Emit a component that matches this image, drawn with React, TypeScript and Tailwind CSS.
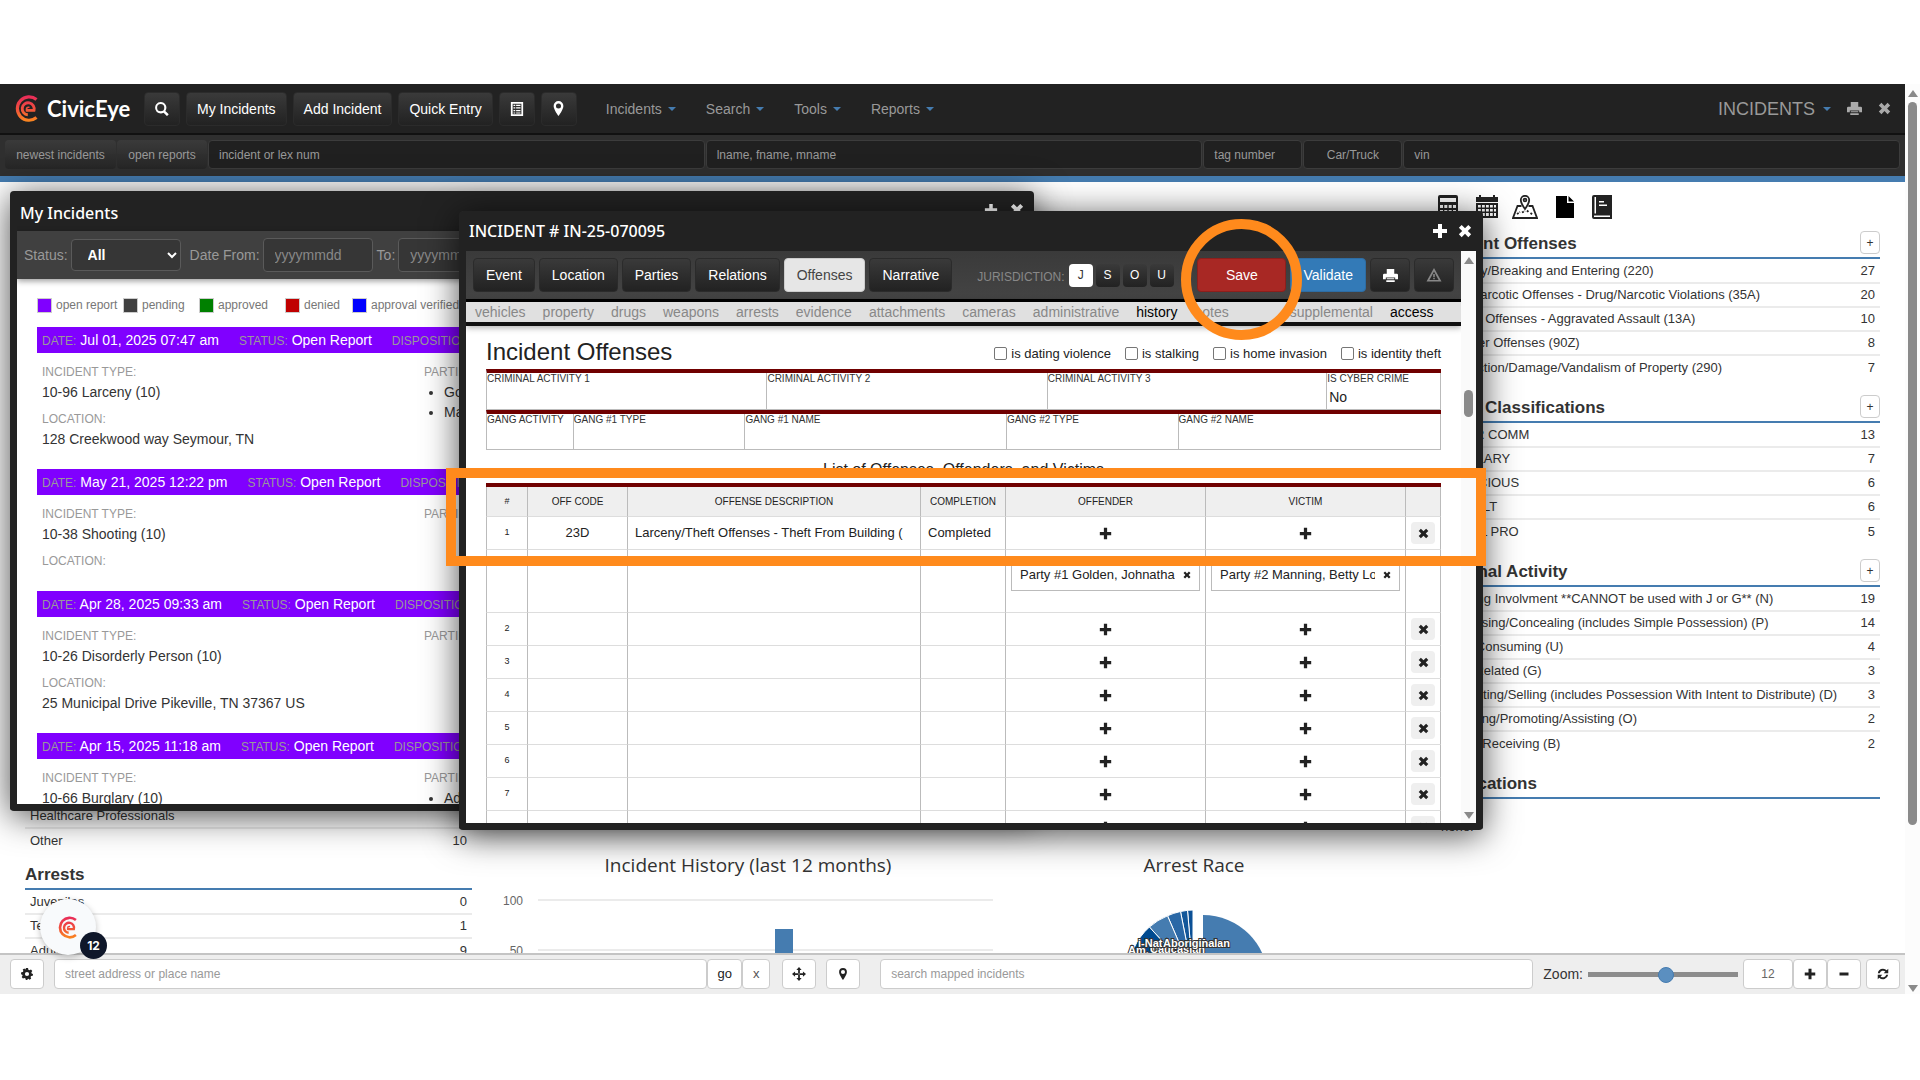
import { useState } from "react";

type IconProps = { name: string; className?: string };

const icons: any = {
  plus: "M6 1h4v5h5v4h-5v5H6v-5H1V6h5z",
  minus: "M2 6h12v4H2z",
  remove: "M4.2 1 8 4.8 11.8 1 15 4.2 11.2 8l3.8 3.8-3.2 3.2L8 11.2 4.2 15 1 11.8 4.8 8 1 4.2z",
  search:
    "M6.5 0a6.5 6.5 0 0 1 5.3 10.2l3.9 3.9-2 2-3.9-3.9A6.5 6.5 0 1 1 6.5 0zm0 2.4a4.1 4.1 0 1 0 0 8.2 4.1 4.1 0 0 0 0-8.2z",
  pin: "M8 0a5.2 5.2 0 0 1 5.2 5.2C13.2 9 8 16 8 16S2.8 9 2.8 5.2A5.2 5.2 0 0 1 8 0zm0 2.6a2.7 2.7 0 1 0 0 5.4 2.7 2.7 0 0 0 0-5.4z",
  print: "M4 1h8v5h3l1 1v5h-3v-2H3v2H0V7l1-1h3zM4 11h8v1H4zM3.500 13h9v2h-9z",
  list: "M1 0h14v16H1zm2 2v12h10V2zm1 1h2v1.500H4zm3 0h5v1.500H7zM4 6h2v1.500H4zm3 0h5v1.500H7zM4 9h2v1.500H4zm3 0h5v1.500H7zM4 12h2v1H4zm3 0h5v1H7z",
  warning: "M8 1l7.500 13.500H.5zm0 3.600L3.400 13h9.200zM7.200 7h1.600v3.200H7.200zm0 4h1.600v1.300H7.200z",
  cog: "M6.600 0h2.800l.4 2.200 1.500.8 2-1 1.800 2.100-1.300 1.700.4 1.500L16 8l-.3 2.400-2.200.4-.8 1.300.9 2-2.100 1.500-1.700-1.300-1 .2L8.600 16H6.400L6 13.900l-1.400-.7-2 .9-1.700-2.200 1.200-1.700-.4-1.200L0 8.200l.3-2.400 2.100-.4.8-1.400-.9-2L4.400.6 6 1.900zM8 5.200a2.800 2.800 0 1 0 0 5.600 2.800 2.800 0 0 0 0-5.600z",
  refresh:
    "M8 1a7 7 0 0 1 5 2.100L15 1v6H9l2.200-2.200A4.500 4.500 0 0 0 3.700 7H1.100A7 7 0 0 1 8 1zM1 9h6l-2.200 2.200A4.500 4.500 0 0 0 12.300 9h2.600A7 7 0 0 1 3 12.900L1 15z",
  locate:
    "M8 0l3 3.500H9V7h3.500V5L16 8l-3.500 3V9H9v3.500h2L8 16l-3-3.500h2V9H3.500v2L0 8l3.500-3v2H7V3.500H5zM8 7.200 7.200 8l.8.8.8-.8z",
};

const Icon = ({ name, className = "size-4" }: IconProps) => (
  <svg viewBox="0 0 16 16" className={className} fill="currentColor" fillRule="evenodd" aria-hidden="true">
    <path d={icons[name]} />
  </svg>
);

const Logo = ({ className, id }: { className: string; id: string }) => (
  <svg viewBox="0 0 24 27" className={className} fill="none" stroke={`url(#${id})`} aria-hidden="true">
    <defs>
      <linearGradient id={id} x1="0" y1="0" x2="0" y2="27" gradientUnits="userSpaceOnUse">
        <stop offset="0" stopColor="#e8295c" />
        <stop offset="0.5" stopColor="#f04e3e" />
        <stop offset="1" stopColor="#fb8a1e" />
      </linearGradient>
    </defs>
    <path d="M21.500 4.500A11.700 11.700 0 1 0 21.500 22.600" strokeWidth="3.200" />
    <path d="M11.500 15.400H19A6 6 0 1 0 12.800 19.800" strokeWidth="2.900" />
    <path d="M11.500 16.500v-2.200a2 2 0 0 1 2-2h1" strokeWidth="1.600" />
  </svg>
);

const Caret = () => (
  <span className="inline-block border-x-4 border-t-4 border-x-transparent border-t-[#457cb0]" />
);

const darkButton =
  "flex items-center justify-center border border-[#2b2b2b] bg-linear-to-b from-[#3a3a3a] to-[#222] text-sm text-white rounded-sm";

const searchField =
  "h-[29px] min-w-0 border border-[#3c3c3c] bg-[#202020] px-2.5 text-xs text-[#999] placeholder-[#999] rounded-sm";

const menus = ["Incidents", "Search", "Tools", "Reports"];

const TopNav = () => (
  <nav className="flex h-[51px] shrink-0 items-center border-b-2 border-[#111] bg-[#222] pr-3.5 pl-[15px]">
    <a href="#" className="flex w-[129px] items-center gap-2 font-['Lato'] text-[22px] font-bold text-white">
      <Logo id="logo-nav" className="h-[27px] w-6" />
      CivicEye
    </a>
    <div className="flex gap-1.5">
      <button aria-label="Search" className={`${darkButton} h-[34px] w-9`}>
        <Icon name="search" className="size-[14px]" />
      </button>
      <button className={`${darkButton} h-[34px] px-2.5`}>My Incidents</button>
      <button className={`${darkButton} h-[34px] px-2.5`}>Add Incident</button>
      <button className={`${darkButton} h-[34px] px-2.5`}>Quick Entry</button>
      <button aria-label="List" className={`${darkButton} h-[34px] w-9`}>
        <Icon name="list" className="size-[14px]" />
      </button>
      <button aria-label="Map" className={`${darkButton} h-[34px] w-9`}>
        <Icon name="pin" className="size-[15px]" />
      </button>
    </div>
    <div className="ml-[29px] flex gap-[30px] text-sm text-[#999]">
      {menus.map((m) => (
        <a href="#" key={m} className="flex items-center gap-1.5">
          {m}
          <Caret />
        </a>
      ))}
    </div>
    <div className="ml-auto flex items-center gap-4 text-[#aaa]">
      <a href="#" className="flex items-center gap-2 text-lg text-[#999]">
        INCIDENTS
        <Caret />
      </a>
      <button aria-label="Print">
        <Icon name="print" className="size-[15px]" />
      </button>
      <button aria-label="Close">
        <Icon name="remove" className="size-[13px]" />
      </button>
    </div>
  </nav>
);

const SearchBar = () => (
  <div className="flex h-[47px] shrink-0 gap-px border-b-6 border-[#457cb0] bg-[#2f2f2f] pt-[5px] pr-[5px] pl-[5px]">
    <button className="h-[29px] w-[111px] rounded-sm bg-linear-to-b from-[#3a3a3a] to-[#262626] text-xs text-[#999]">
      newest incidents
    </button>
    <button className="h-[29px] w-[90px] rounded-sm bg-linear-to-b from-[#3a3a3a] to-[#262626] text-xs text-[#999]">
      open reports
    </button>
    <input aria-label="incident or lex num" placeholder="incident or lex num" className={`${searchField} flex-1`} />
    <input aria-label="name" placeholder="lname, fname, mname" className={`${searchField} flex-1`} />
    <input aria-label="tag number" placeholder="tag number" className={`${searchField} w-[99px]`} />
    <button className={`${searchField} w-[99px] text-[#777]`}>Car/Truck</button>
    <input aria-label="vin" placeholder="vin" className={`${searchField} flex-1`} />
  </div>
);

type Row = [string, string];

const Rows = ({ rows }: { rows: Row[] }) => (
  <table className="w-full text-[13px] leading-5 text-[#333]">
    <tbody>
      {rows.map(([label, count], idx) => (
        <tr key={label} className={idx < rows.length - 1 ? "h-6 border-b-2 border-[#ebebeb]" : "h-6"}>
          <td className="pl-[5px] whitespace-nowrap">{label}</td>
          <td className="pr-[5px] text-right">{count}</td>
        </tr>
      ))}
    </tbody>
  </table>
);

const LeftStats = () => (
  <section className="-mb-[9px] flex flex-col justify-end">
    <Rows
      rows={[
        ["Healthcare Professionals", ""],
        ["Other", "10"],
      ]}
    />
    <h3 className="mt-2.5 border-b-2 border-[#457cb0] text-[17px] leading-[26px] font-bold text-[#333]">Arrests</h3>
    <Rows
      rows={[
        ["Juveniles", "0"],
        ["Teens", "1"],
        ["Adults", "9"],
      ]}
    />
  </section>
);

const sections: { title: string; rows: Row[] }[] = [
  {
    title: "Incident Offenses",
    rows: [
      ["Burglary/Breaking and Entering (220)", "27"],
      ["Drug/Narcotic Offenses - Drug/Narcotic Violations (35A)", "20"],
      ["Assault Offenses - Aggravated Assault (13A)", "10"],
      ["All Other Offenses (90Z)", "8"],
      ["Destruction/Damage/Vandalism of Property (290)", "7"],
    ],
  },
  {
    title: "Event Classifications",
    rows: [
      ["OTHER COMM", "13"],
      ["BURGLARY", "7"],
      ["SUSPICIOUS", "6"],
      ["ASSAULT", "6"],
      ["ANIMAL PRO", "5"],
    ],
  },
  {
    title: "Criminal Activity",
    rows: [
      ["No Gang Involvment **CANNOT be used with J or G** (N)", "19"],
      ["Possessing/Concealing (includes Simple Possession) (P)", "14"],
      ["Using/Consuming (U)", "4"],
      ["Gang Related (G)", "3"],
      ["Distributing/Selling (includes Possession With Intent to Distribute) (D)", "3"],
      ["Operating/Promoting/Assisting (O)", "2"],
      ["Buying/Receiving (B)", "2"],
    ],
  },
];

const sectionHeading = "flex h-7 items-start justify-between border-b-2 border-[#457cb0]";

const RightStats = () => (
  <section className="pt-[13px]">
    <div className="flex items-start gap-[18px] pl-1 text-[#222]">
      <svg viewBox="0 0 20 24" className="h-6 w-5" fill="currentColor">
        <path
          fillRule="evenodd"
          d="M2 0h16a2 2 0 0 1 2 2v20a2 2 0 0 1-2 2H2a2 2 0 0 1-2-2V2a2 2 0 0 1 2-2zm0 3v4h16V3zm0 7v3h3v-3zm4.300 0v3h3v-3zm4.400 0v3h3v-3zm4.300 0v3h3v-3zM2 15v3h3v-3zm4.300 0v3h3v-3zm4.400 0v3h3v-3zm4.300 0v7h3v-7zM2 20v2h3v-2zm4.300 0v2h3v-2zm4.400 0v2h3v-2z"
        />
      </svg>
      <svg viewBox="0 0 22 24" className="h-6 w-[22px]" fill="currentColor">
        <path
          fillRule="evenodd"
          d="M3 0h2v2h12V0h2v2h3v5H0V2h3zM0 8h22v15H0zm2 2v2.500h2.800V10zm4 0v2.500h2.800V10zm4 0v2.500h2.800V10zm4 0v2.500h2.800V10zm4 0v2.500h2V10zM2 14v2.500h2.800V14zm4 0v2.500h2.800V14zm4 0v2.500h2.800V14zm4 0v2.500h2.800V14zm4 0v2.500h2V14zM2 18v3h2.800v-3zm4 0v3h2.800v-3zm4 0v3h2.800v-3zm4 0v3h2.800v-3zm4 0v3h2v-3z"
        />
      </svg>
      <svg viewBox="0 0 26 24" className="-ml-1 h-6 w-[26px]" fill="none" stroke="currentColor" strokeWidth="1.800">
        <path d="M9.500 11H5.500L1 23h24l-4.500-12h-4" />
        <path d="M13 14S8.800 8.200 8.800 5a4.200 4.200 0 0 1 8.400 0C17.200 8.200 13 14 13 14z" />
        <circle cx="13" cy="5" r="1.400" />
        <path d="M5 19l3-2M10 17.500l3-1.500M15 15.500l2 2M18.500 18l2 1.500" strokeDasharray="2 1" />
      </svg>
      <svg viewBox="0 0 18 24" className="h-6 w-[18px]" fill="#000">
        <path d="M0 1h11v7h7v15H0zM12.500 1 18 6.500h-5.500z" />
      </svg>
      <svg viewBox="0 0 20 24" className="h-6 w-5" fill="currentColor">
        <path fillRule="evenodd" d="M2 0h18v24H2a2 2 0 0 1-2-2V2a2 2 0 0 1 2-2zm.5 2v16.500H4V2zM7 6v1.500h5V6zm0 3.500V11h8V9.500zM2 20.500v1.500h16v-1.500z" />
      </svg>
    </div>
    {sections.map((s, idx) => (
      <div key={s.title} className={idx === 0 ? "mt-3" : "mt-4"}>
        <div className={sectionHeading}>
          <h3 className="text-[17px] leading-[26px] font-bold text-[#333]">{s.title}</h3>
          <button
            aria-label={`Expand ${s.title}`}
            className="h-[23px] w-5 rounded-sm border border-[#ccc] bg-white text-xs leading-5 text-[#333]"
          >
            +
          </button>
        </div>
        <Rows rows={s.rows} />
      </div>
    ))}
    <div className="mt-4">
      <div className={sectionHeading}>
        <h3 className="text-[17px] leading-[26px] font-bold text-[#333]">Notifications</h3>
      </div>
      <p className="pt-[18px] pl-[7px] text-[13px] leading-5 text-[#333]">none.</p>
    </div>
  </section>
);

const chartTitle = "text-center font-['Open_Sans'] text-[19px] leading-6 text-[#333]";

const Charts = () => (
  <section className="flex items-end pr-11 pl-[26px]">
    <figure className="flex-1">
      <figcaption className={chartTitle}>Incident History (last 12 months)</figcaption>
      <svg viewBox="0 0 500 76" className="h-[76px] w-full font-['Liberation_Sans'] text-[12px]" fill="#666">
        <text x="25" y="28" textAnchor="end">100</text>
        <text x="25" y="78" textAnchor="end">50</text>
        <path d="M40 23h455M40 73h455" stroke="#ebebeb" strokeWidth="2" />
        <rect x="277" y="52" width="18" height="24" fill="#457cb0" />
      </svg>
    </figure>
    <figure className="w-[392px]">
      <figcaption className={chartTitle}>Arrest Race</figcaption>
      <svg viewBox="0 0 392 76" className="h-[76px] w-full" stroke="#fff" strokeWidth="1">
        <path d="M205 103V38a65 65 0 0 1 65 65z" fill="#457cb0" stroke="none" />
        <path d="M195 98V33l-5.500.3z" fill="#0b5096" />
        <path d="M195 98 189.500 33.300l-7 1.200z" fill="#13579a" />
        <path d="M195 98 182.500 34.500q-7 1.500-13 4.300z" fill="#2a68a6" />
        <path d="M195 98 169.500 38.800q-10 4-18.100 11.200z" fill="#457cb0" />
        <path d="M195 98 151.400 50A65 65 0 0 0 130 98z" fill="#004a90" />
        <g
          className="font-['Liberation_Sans'] text-[11px] font-bold"
          fill="#fff"
          stroke="#333"
          strokeWidth="2"
          paintOrder="stroke"
        >
          <text x="130" y="77">Am. Indian</text>
          <text x="152" y="76">Caucasian</text>
          <text x="140" y="70">i-Nat</text>
          <text x="202" y="70">Asian</text>
          <text x="165" y="70">Aboriginal</text>
        </g>
      </svg>
    </figure>
  </section>
);

const toolButton =
  "flex h-[30px] items-center justify-center rounded-sm border border-[#ccc] bg-white text-[13px] text-[#222]";

const MapBar = () => {
  const [zoom, setZoom] = useState(12);
  return (
    <footer className="flex h-[41px] shrink-0 items-center border-t-2 border-[#c4c4c4] bg-[#eee] pr-[5px] pb-px pl-2.5">
      <button aria-label="Settings" className={`${toolButton} w-[34px]`}>
        <Icon name="cog" className="size-3" />
      </button>
      <input
        aria-label="street address or place name"
        placeholder="street address or place name"
        className="ml-2.5 h-[30px] min-w-0 flex-1 rounded-sm border border-[#ccc] bg-white px-2.5 text-xs placeholder-[#999]"
      />
      <button className={`${toolButton} w-[35px]`}>go</button>
      <button className={`${toolButton} w-7 text-[#555]`}>x</button>
      <button aria-label="Locate" className={`${toolButton} ml-3 w-[34px]`}>
        <Icon name="locate" className="size-[14px]" />
      </button>
      <button aria-label="Drop pin" className={`${toolButton} ml-2.5 w-[34px]`}>
        <Icon name="pin" className="size-3" />
      </button>
      <input
        aria-label="search mapped incidents"
        placeholder="search mapped incidents"
        className="ml-5 h-[30px] min-w-0 flex-1 rounded-sm border border-[#ccc] bg-white px-2.5 text-xs placeholder-[#999]"
      />
      <label htmlFor="zoom" className="ml-2.5 text-sm text-[#333]">
        Zoom:
      </label>
      <input
        id="zoom"
        type="range"
        min="0"
        max="23"
        value={zoom}
        onChange={(e) => setZoom(Number(e.target.value))}
        className="mt-0.5 ml-[5px] h-4 w-[150px] appearance-none bg-transparent [&::-webkit-slider-runnable-track]:h-4 [&::-webkit-slider-runnable-track]:bg-[linear-gradient(transparent_5px,#8c8c8c_5px,#8c8c8c_10px,transparent_10px)] [&::-webkit-slider-thumb]:size-4 [&::-webkit-slider-thumb]:appearance-none [&::-webkit-slider-thumb]:rounded-full [&::-webkit-slider-thumb]:border [&::-webkit-slider-thumb]:border-[#457cb0] [&::-webkit-slider-thumb]:bg-[#5b8fc0]"
      />
      <input
        aria-label="Zoom level"
        readOnly
        value={zoom}
        className="ml-[5px] h-[30px] w-[50px] rounded-sm border border-[#ccc] bg-white text-center text-xs text-[#666]"
      />
      <button aria-label="Zoom in" className={`${toolButton} w-[34px]`}>
        <Icon name="plus" className="size-3" />
      </button>
      <button aria-label="Zoom out" className={`${toolButton} w-[34px]`}>
        <Icon name="minus" className="size-3" />
      </button>
      <button aria-label="Refresh" className={`${toolButton} ml-[5px] w-[34px]`}>
        <Icon name="refresh" className="size-3" />
      </button>
    </footer>
  );
};

const legend = [
  { label: "open report", color: "bg-[#8000ff]", width: "w-[86px]" },
  { label: "pending", color: "bg-[#404040]", width: "w-[76px]" },
  { label: "approved", color: "bg-[#008000]", width: "w-[86px]" },
  { label: "denied", color: "bg-[#c00000]", width: "w-[67px]" },
  { label: "approval verified", color: "bg-[#0000ff]", width: "w-[120px]" },
];

const incidents = [
  { date: "Jul 01, 2025 07:47 am", type: "10-96 Larceny (10)", location: "128 Creekwood way Seymour, TN", parties: ["Golden", "Manning"] },
  { date: "May 21, 2025 12:22 pm", type: "10-38 Shooting (10)", location: "", parties: [] },
  { date: "Apr 28, 2025 09:33 am", type: "10-26 Disorderly Person (10)", location: "25 Municipal Drive Pikeville, TN 37367 US", parties: [] },
  { date: "Apr 15, 2025 11:18 am", type: "10-66 Burglary (10)", location: "", parties: ["Adams"] },
];

const windowFrame =
  "absolute flex flex-col overflow-hidden rounded-sm border-[7px] border-t-0 border-[#222] bg-white shadow-[0_5px_35px_rgba(0,0,0,0.7)]";

const darkInput = "w-[110px] rounded-sm border border-[#5a5a5a] bg-[#363636] text-sm";

const caption = "text-xs leading-5 text-[#999]";

const MyIncidents = () => (
  <div className={`${windowFrame} top-[107px] left-2.5 h-[620px] w-[1024px]`}>
    <header className="flex h-10 shrink-0 items-center justify-between bg-[#222] pt-1 pr-[3px] pl-[3px] text-white">
      <h2 className="font-['Noto_Sans'] text-base font-medium">My Incidents</h2>
      <div className="flex gap-3 pb-1.5">
        <button aria-label="Maximize">
          <Icon name="plus" className="size-[14px]" />
        </button>
        <button aria-label="Close">
          <Icon name="remove" className="size-[14px]" />
        </button>
      </div>
    </header>
    <div className="flex h-12 shrink-0 items-center gap-[3px] bg-[#404040] pl-[7px] text-sm text-[#999] shadow-[0_2px_6px_rgba(0,0,0,0.4)]">
      <label htmlFor="status">Status:</label>
      <select id="status" className={`${darkInput} h-8 pl-3 font-bold text-white`}>
        <option>All</option>
      </select>
      <label htmlFor="from" className="ml-1.5">
        Date From:
      </label>
      <input id="from" placeholder="yyyymmdd" className={`${darkInput} h-[34px] px-[11px] placeholder-[#888]`} />
      <label htmlFor="to" className="ml-px">
        To:
      </label>
      <input id="to" placeholder="yyyymmdd" className={`${darkInput} h-[34px] px-[11px] placeholder-[#888]`} />
    </div>
    <div className="min-h-0 flex-1 overflow-hidden px-5 pt-4">
      <div className="flex h-5 items-center">
        {legend.map((l) => (
          <div key={l.label} className={`flex items-center gap-1 text-xs whitespace-nowrap text-[#777] ${l.width}`}>
            <span className={`size-[15px] border border-[#ccc] ${l.color}`} />
            {l.label}
          </div>
        ))}
      </div>
      <div className="mt-3">
        {incidents.map((i) => (
          <article key={i.date} className="mb-5">
            <div className="flex h-[26px] items-center gap-5 bg-[#8000ff] pl-[5px] text-sm text-white">
              <span>
                <span className={caption}>DATE:</span> {i.date}
              </span>
              <span>
                <span className={caption}>STATUS:</span> Open Report
              </span>
              <span>
                <span className={caption}>DISPOSITION:</span> Open
              </span>
            </div>
            <div className="flex pt-[9px] pl-[5px] text-sm leading-5 text-[#333]">
              <div className="w-[382px]">
                <p className={caption}>INCIDENT TYPE:</p>
                <p>{i.type}</p>
                <p className={`${caption} mt-[7px]`}>LOCATION:</p>
                {i.location && <p>{i.location}</p>}
              </div>
              <div>
                <p className={caption}>PARTIES:</p>
                <ul className="list-disc pl-5">
                  {i.parties.map((p) => (
                    <li key={p}>{p}</li>
                  ))}
                </ul>
              </div>
            </div>
          </article>
        ))}
      </div>
    </div>
  </div>
);

const tabs = ["Event", "Location", "Parties", "Relations", "Offenses", "Narrative"];

const links = [
  "vehicles",
  "property",
  "drugs",
  "weapons",
  "arrests",
  "evidence",
  "attachments",
  "cameras",
  "administrative",
  "history",
  "notes",
  "supplemental",
  "access",
];

const linkStyle = (l: string) => {
  if (l === "history" || l === "access") return "text-black";
  if (l === "supplemental") return "ml-11 text-[#888]";
  return "text-[#888]";
};

const flags = ["is dating violence", "is stalking", "is home invasion", "is identity theft"];

const Field = ({ label, value = "" }: { label: string; value?: string }) => (
  <div className="flex flex-col border-r border-b border-[#bbb]">
    <label htmlFor={label} className="text-[10px] leading-3 whitespace-nowrap text-[#333]">
      {label}
    </label>
    <input id={label} defaultValue={value} className="min-h-0 w-full flex-1 pl-0.5 text-sm text-[#222]" />
  </div>
);

const cell = "border-r border-b border-r-[#bbb] border-b-[#ddd] first:border-l first:border-l-[#bbb]";

const OffenseRow = ({ num }: { num: number }) => (
  <tr className="h-[33px]">
    <td className={`${cell} text-[9px]`}>{num}</td>
    <td className={cell}>{num === 1 && "23D"}</td>
    <td className={`${cell} overflow-hidden pl-[7px] text-left whitespace-nowrap`}>
      {num === 1 && "Larceny/Theft Offenses - Theft From Building ("}
    </td>
    <td className={`${cell} pl-[7px] text-left`}>{num === 1 && "Completed"}</td>
    <td className={cell}>
      <button aria-label={`Add offender ${num}`} className="block w-full">
        <Icon name="plus" className="mx-auto size-[13px]" />
      </button>
    </td>
    <td className={cell}>
      <button aria-label={`Add victim ${num}`} className="block w-full">
        <Icon name="plus" className="mx-auto size-[13px]" />
      </button>
    </td>
    <td className={cell}>
      <button
        aria-label={`Remove offense ${num}`}
        className="mx-auto flex h-[22px] w-6 items-center justify-center rounded-sm bg-[#efefef]"
      >
        <Icon name="remove" className="size-[11px]" />
      </button>
    </td>
  </tr>
);

const Party = ({ name }: { name: string }) => (
  <div className="mx-[5px] mt-2 flex h-[33px] items-center gap-2 border border-[#bbb] px-2">
    <span className="w-[157px] overflow-hidden text-left whitespace-nowrap">{name}</span>
    <button aria-label="Remove party">
      <Icon name="remove" className="size-2" />
    </button>
  </div>
);

const IncidentWindow = () => {
  const [active, setActive] = useState("Offenses");
  const [jurisdiction, setJurisdiction] = useState("J");
  return (
    <div className={`${windowFrame} top-[127px] left-[459px] h-[619px] w-[1024px]`}>
      <header className="flex h-10 shrink-0 items-center justify-between bg-[#222] pr-1 pl-[3px] text-white">
        <h2 className="font-['Noto_Sans'] text-base font-medium">INCIDENT # IN-25-070095</h2>
        <div className="flex gap-2.5">
          <button aria-label="Maximize">
            <Icon name="plus" className="size-4" />
          </button>
          <button aria-label="Close">
            <Icon name="remove" className="size-[14px]" />
          </button>
        </div>
      </header>
      <div className="flex min-h-0 flex-1">
        <div className="min-w-0 flex-1 overflow-hidden">
          <div className="flex h-12 items-center gap-1 bg-linear-to-b from-[#3a3a3a] to-[#444] px-[7px]">
            {tabs.map((t) => (
              <button
                key={t}
                onClick={() => setActive(t)}
                className={
                  active === t
                    ? "h-[34px] rounded-sm border border-[#ccc] bg-[#e6e6e6] px-3 text-sm text-[#444]"
                    : `${darkButton} h-[34px] px-3`
                }
              >
                {t}
              </button>
            ))}
            <span className="ml-[21px] pt-1 text-xs text-[#888]">JURISDICTION:</span>
            <div className="flex gap-[3px]">
              {["J", "S", "O", "U"].map((j) => (
                <button
                  key={j}
                  onClick={() => setJurisdiction(j)}
                  className={
                    jurisdiction === j
                      ? "h-[23px] w-6 rounded-sm bg-white text-xs text-[#333]"
                      : "h-[23px] w-6 rounded-sm bg-linear-to-b from-[#3a3a3a] to-[#222] text-xs text-white"
                  }
                >
                  {j}
                </button>
              ))}
            </div>
            <button className="ml-auto h-[34px] w-[89px] rounded-sm border border-[#8c1f1c] bg-[#a82824] text-sm text-white">
              Save
            </button>
            <button className="h-[34px] rounded-sm border border-[#2e6da4] bg-[#337ab7] px-3 text-sm text-white">
              Validate
            </button>
            <button aria-label="Print" className={`${darkButton} h-[34px] w-10`}>
              <Icon name="print" className="size-[15px]" />
            </button>
            <button aria-label="Warnings" className={`${darkButton} h-[34px] w-10`}>
              <Icon name="warning" className="size-4 text-[#888]" />
            </button>
          </div>
          <div className="flex h-[27px] items-center gap-[17px] border-t-3 border-b-4 border-t-black border-b-[#111] bg-[#e0e0e0] pl-[9px] text-sm leading-5 shadow-[0_2px_6px_rgba(0,0,0,0.3)]">
            {links.map((l) => (
              <a href="#" key={l} className={linkStyle(l)}>
                {l}
              </a>
            ))}
          </div>
          <div className="px-5">
            <div className="flex h-[43px] items-center justify-between pt-2">
              <h1 className="text-2xl text-[#222]">Incident Offenses</h1>
              <div className="flex gap-3.5 pt-1 text-[13px] text-[#222]">
                {flags.map((f) => (
                  <label key={f} className="flex items-center gap-1">
                    <input
                      type="checkbox"
                      className="size-[13px] appearance-none rounded-xs border border-[#767676] bg-white"
                    />
                    {f}
                  </label>
                ))}
              </div>
            </div>
            <div className="grid h-[41px] grid-cols-[281fr_281fr_280fr_114fr] border-t-4 border-l border-t-[#700000] border-l-[#bbb]">
              <Field label="CRIMINAL ACTIVITY 1" />
              <Field label="CRIMINAL ACTIVITY 2" />
              <Field label="CRIMINAL ACTIVITY 3" />
              <Field label="IS CYBER CRIME" value="No" />
            </div>
            <div className="grid h-10 grid-cols-[87fr_172fr_262fr_172fr_263fr] border-t-4 border-l border-t-[#700000] border-l-[#bbb]">
              <Field label="GANG ACTIVITY" />
              <Field label="GANG #1 TYPE" />
              <Field label="GANG #1 NAME" />
              <Field label="GANG #2 TYPE" />
              <Field label="GANG #2 NAME" />
            </div>
            <h2 className="h-[33px] pt-2 text-center text-base leading-6 text-[#222]">
              List of Offenses, Offenders, and Victims
            </h2>
            <table className="w-full table-fixed border-separate border-spacing-0 border-t-4 border-[#700000] text-center text-[13px] text-[#222]">
              <colgroup>
                <col className="w-[42px]" />
                <col className="w-[100px]" />
                <col />
                <col className="w-[85px]" />
                <col className="w-[200px]" />
                <col className="w-[200px]" />
                <col className="w-[35px]" />
              </colgroup>
              <thead>
                <tr className="h-[30px] bg-[#efefef] text-[10px]">
                  <th className={`${cell} text-[9px] font-normal`}>#</th>
                  <th className={`${cell} font-normal`}>OFF CODE</th>
                  <th className={`${cell} font-normal`}>OFFENSE DESCRIPTION</th>
                  <th className={`${cell} font-normal`}>COMPLETION</th>
                  <th className={`${cell} font-normal`}>OFFENDER</th>
                  <th className={`${cell} font-normal`}>VICTIM</th>
                  <th className={cell}></th>
                </tr>
              </thead>
              <tbody>
                <OffenseRow num={1} />
                <tr className="h-[63px] align-top">
                  <td className={cell}></td>
                  <td className={cell}></td>
                  <td className={cell}></td>
                  <td className={cell}></td>
                  <td className={cell}>
                    <Party name="Party #1 Golden, Johnathan" />
                  </td>
                  <td className={cell}>
                    <Party name="Party #2 Manning, Betty Lou" />
                  </td>
                  <td className={cell}></td>
                </tr>
                {[2, 3, 4, 5, 6, 7, 8].map((n) => (
                  <OffenseRow key={n} num={n} />
                ))}
              </tbody>
            </table>
          </div>
        </div>
        <div className="flex w-[15px] flex-col items-center justify-between bg-[#fafafa] pt-1.5 pb-1">
          <span className="border-x-5 border-b-7 border-x-transparent border-b-[#8a8a8a]" />
          <span className="mb-[270px] h-[27px] w-[9px] rounded-full bg-[#8a8a8a]" />
          <span className="border-x-5 border-t-7 border-x-transparent border-t-[#8a8a8a]" />
        </div>
      </div>
    </div>
  );
};

const App = () => (
  <div className="flex h-screen bg-white pt-[84px] pb-[86px] font-['Liberation_Sans',sans-serif]">
    <div className="relative flex min-w-0 flex-1">
      <div className="flex min-w-0 flex-1 flex-col">
        <TopNav />
        <SearchBar />
        <main className="grid min-h-0 flex-1 grid-cols-[447px_1fr_446px] overflow-hidden pr-[25px] pl-[25px]">
          <LeftStats />
          <Charts />
          <RightStats />
        </main>
        <MapBar />
      </div>
      <div className="flex w-[15px] flex-col items-center bg-[#fcfcfc] pt-1.5 pb-0.5">
        <span className="border-x-5 border-b-7 border-x-transparent border-b-[#8a8a8a]" />
        <span className="mt-[5px] mb-40 w-[9px] flex-1 rounded-full bg-[#8a8a8a]" />
        <span className="border-x-5 border-t-7 border-x-transparent border-t-[#8a8a8a]" />
      </div>
      <MyIncidents />
      <IncidentWindow />
      <button
        aria-label="Open chat"
        className="absolute bottom-[39px] left-10 flex size-14 items-center justify-center rounded-full bg-[#f8fafc] shadow-[0_2px_6px_rgba(0,0,0,0.25)]"
      >
        <Logo id="logo-chat" className="h-[23px] w-5" />
        <span className="absolute -right-[11px] -bottom-1 flex size-[27px] items-center justify-center rounded-full bg-[#0f172a] font-['Inter'] text-xs font-bold text-white">
          12
        </span>
      </button>
      {/* callouts */}
      <div className="pointer-events-none absolute top-[135px] left-[1181px] size-[121px] rounded-full border-10 border-[#ff8a1c]" />
      <div className="pointer-events-none absolute top-[384px] left-[446px] h-[98px] w-[1040px] border-10 border-[#ff8a1c]" />
    </div>
  </div>
);

export default App;
